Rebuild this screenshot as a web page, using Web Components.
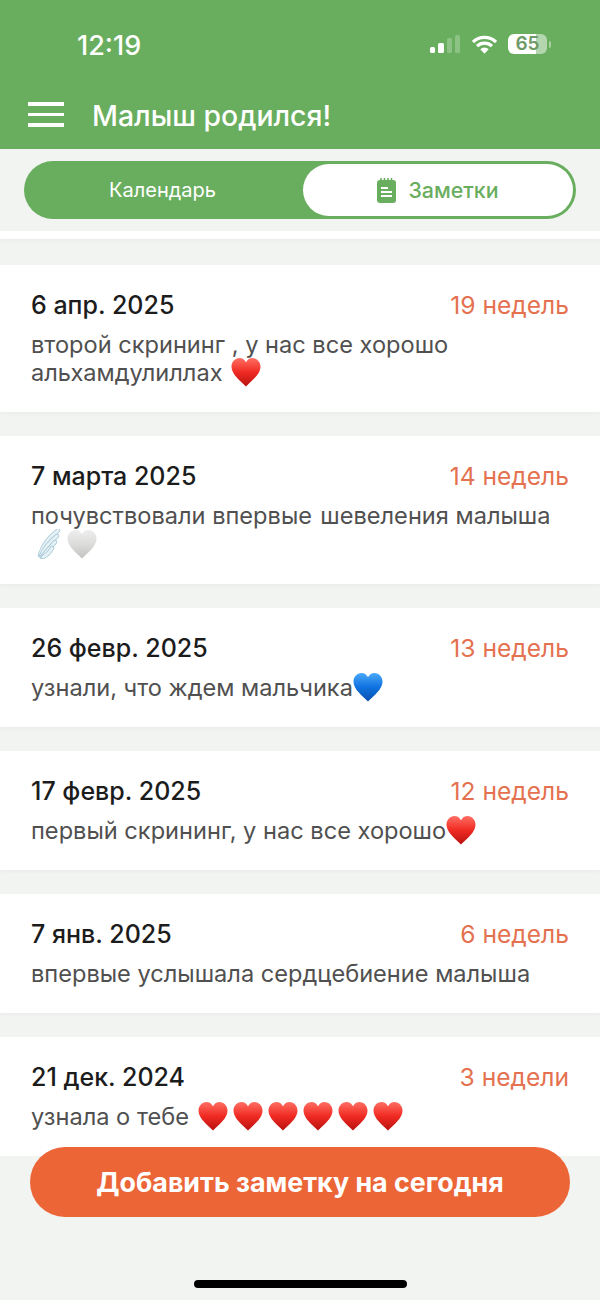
<!DOCTYPE html>
<html lang="ru">
<head>
<meta charset="utf-8">
<title>Малыш родился!</title>
<style>
  html, body { margin: 0; padding: 0; background: #f2f4f2; }
  body { font-family: Inter, "Noto Sans", sans-serif; }
</style>
</head>
<body>
<baby-screen>
  <status-bar slot="status" time="12:19" battery="65"></status-bar>
  <app-header slot="header">Малыш родился!</app-header>
  <note-tabs slot="tabs"></note-tabs>
  <note-list slot="list">
    <note-card date="6 апр. 2025" weeks="19 недель">второй скрининг , у нас все хорошо альхамдулиллах <emoji-icon kind="red" spaced></emoji-icon></note-card>
    <note-card date="7 марта 2025" weeks="14 недель">почувствовали впервые <span style="letter-spacing:-5px">&nbsp;</span>шевеления малыша <emoji-icon kind="wing" style="margin-right:-.6px"></emoji-icon> <emoji-icon kind="white"></emoji-icon></note-card>
    <note-card date="26 февр. 2025" weeks="13 недель">узнали, что ждем мальчика<emoji-icon kind="blue"></emoji-icon></note-card>
    <note-card date="17 февр. 2025" weeks="12 недель">первый скрининг, у нас все хорошо<emoji-icon kind="red"></emoji-icon></note-card>
    <note-card date="7 янв. 2025" weeks="6 недель">впервые услышала сердцебиение малыша</note-card>
    <note-card date="21 дек. 2024" weeks="3 недели">узнала о тебе <emoji-icon kind="red" spaced></emoji-icon> <emoji-icon kind="red"></emoji-icon> <emoji-icon kind="red"></emoji-icon> <emoji-icon kind="red"></emoji-icon> <emoji-icon kind="red"></emoji-icon> <emoji-icon kind="red"></emoji-icon></note-card>
  </note-list>
  <add-button slot="action">Добавить заметку на сегодня</add-button>
</baby-screen>

<script>
class BabyScreen extends HTMLElement {
  constructor() {
    super();
    this.attachShadow({ mode: "open" }).innerHTML = `
      <style>
        :host { display: flex; flex-direction: column; width: 600px; height: 1300px; overflow: hidden; position: relative; background: #f2f4f2; }
        .list { display: block; height: 925px; overflow: hidden; flex: none; }
        .action { position: absolute; left: 30px; right: 30px; top: 1147px; }
        .home { position: absolute; left: 194px; top: 1280px; width: 213px; height: 8px; border-radius: 4px; background: #000; }
      </style>
      <slot name="status"></slot>
      <slot name="header"></slot>
      <slot name="tabs"></slot>
      <div class="list"><slot name="list"></slot></div>
      <div class="action"><slot name="action"></slot></div>
      <div class="home"></div>
    `;
  }
}

class StatusBar extends HTMLElement {
  constructor() {
    super();
    const time = this.getAttribute("time");
    const battery = this.getAttribute("battery");
    this.attachShadow({ mode: "open" }).innerHTML = `
      <style>
        :host { display: flex; align-items: center; justify-content: space-between; height: 90px; box-sizing: border-box; padding: 0 53px 2px 77px; background: #69ae5e; color: #fff; }
        .time { font-size: 27px; font-weight: 500; margin-top: 2px; }
        .icons { display: flex; align-items: center; gap: 11px; }
        .battery { position: relative; width: 39px; height: 20px; border-radius: 6px; background: linear-gradient(90deg, #fff 72%, #b4d6ae 72%); color: #6f9a68; font: 600 19px/20px Inter, sans-serif; text-align: center; }
        .battery::after { content: ""; position: absolute; left: 41px; top: 7px; width: 2px; height: 7px; border-radius: 0 2px 2px 0; background: #a9d0a2; }
      </style>
      <span class="time">${time}</span>
      <span class="icons">
        <svg width="31" height="19" viewBox="0 0 31 19">
          <rect x="0" y="12" width="5" height="6" rx="1.500" fill="#fff"/>
          <rect x="8" y="8" width="6" height="10" rx="1.500" fill="#fff"/>
          <rect x="17" y="3" width="5" height="15" rx="1.500" fill="#8dc285"/>
          <rect x="25" y="0" width="5" height="18" rx="1.500" fill="#8dc285"/>
        </svg>
        <svg width="25" height="19" viewBox="0 0 25 19">
          <path d="M1 7a16.500 16.500 0 0 1 23 0M5 11.200a10.800 10.800 0 0 1 15 0" fill="none" stroke="#fff" stroke-width="3.200"/>
          <path d="M8.300 14.200a6 6 0 0 1 8.400 0L12.500 18.800z" fill="#fff"/>
        </svg>
        <span class="battery">${battery}</span>
      </span>
    `;
  }
}

class AppHeader extends HTMLElement {
  constructor() {
    super();
    this.attachShadow({ mode: "open" }).innerHTML = `
      <style>
        :host { display: flex; align-items: center; gap: 28px; height: 59px; box-sizing: border-box; padding: 0 0 10px 28px; background: #69ae5e; color: #fff; font-size: 28.400px; font-weight: 500; }
        .menu { display: flex; flex-direction: column; gap: 7.200px; width: 36px; }
        .menu i { display: block; height: 3.500px; background: #fff; }
        .title { padding-top: 2px; }
      </style>
      <span class="menu"><i></i><i></i><i></i></span>
      <span class="title"><slot></slot></span>
    `;
  }
}

class NoteTabs extends HTMLElement {
  constructor() {
    super();
    this.attachShadow({ mode: "open" }).innerHTML = `
      <style>
        :host { display: block; padding: 12px 24px; background: #f2f4f2; }
        .track { display: flex; height: 58px; box-sizing: border-box; padding: 3px; border-radius: 29px; background: #69ae5e; }
        .tab { display: flex; flex: 1; align-items: center; justify-content: center; gap: 12px; font-size: 20px; color: #fff; }
        .off { padding-right: 5px; }
        .on { flex: none; width: 270px; border-radius: 26px; background: #fff; color: #69ae5e; font-size: 21.400px; font-weight: 500; }
      </style>
      <div class="track">
        <span class="tab off">Календарь</span>
        <span class="tab on">
          <svg width="19" height="25" viewBox="0 0 19 25">
            <path d="M3 2h13a3 3 0 0 1 3 3v17a3 3 0 0 1-3 3H3a3 3 0 0 1-3-3V5a3 3 0 0 1 3-3z" fill="#69ae5e"/>
            <path d="M4 0v3M7.500 0v3M11 0v3M14.500 0v3" stroke="#69ae5e" stroke-width="1.600"/>
            <path d="M4 10h7M4 14h11M4 18h11" stroke="#fff" stroke-width="2"/>
          </svg>
          Заметки
        </span>
      </div>
    `;
  }
}

class NoteList extends HTMLElement {
  constructor() {
    super();
    this.attachShadow({ mode: "open" }).innerHTML = `
      <style>
        :host { display: flex; flex-direction: column; gap: 24px; }
        .stub { height: 8px; background: #fff; margin-bottom: 2px; box-shadow: 0 2px 4px rgba(0,0,0,.03); }
      </style>
      <div class="stub"></div>
      <slot></slot>
    `;
  }
}

class NoteCard extends HTMLElement {
  constructor() {
    super();
    const date = this.getAttribute("date");
    const weeks = this.getAttribute("weeks");
    this.attachShadow({ mode: "open" }).innerHTML = `
      <style>
        :host { display: block; box-sizing: border-box; padding: 22px 31px 24.800px; background: #fff; box-shadow: 0 2px 4px rgba(0,0,0,.03); }
        .top { display: flex; justify-content: space-between; align-items: baseline; height: 36px; line-height: 36px; margin-bottom: 8px; }
        .date { font-size: 25px; font-weight: 500; color: #1c1c1c; }
        .weeks { font-size: 24.600px; color: #e4714f; }
        .text { font-size: 23.600px; line-height: 28.300px; color: #505050; width: 530px; }
      </style>
      <div class="top"><span class="date">${date}</span><span class="weeks">${weeks}</span></div>
      <div class="text"><slot></slot></div>
    `;
  }
}

// hearts and the wing are drawn, no emoji font is installed
const HEARTS = {
  red: ["#ff6f64", "#f02a22", "#b81210"],
  blue: ["#4aa8f8", "#0f72e0", "#0a50ac"],
  white: ["#eeeeee", "#dcdcdb", "#c2c2c0"],
};
let emojiId = 0;

class EmojiIcon extends HTMLElement {
  constructor() {
    super();
    const kind = this.getAttribute("kind");
    const id = "e" + emojiId++;
    let art;
    if (kind === "wing") {
      const feathers = ["M9 26Q13 12 27 1.500", "M10 27Q15 16 26 7", "M11 28Q17 21 24 13", "M12 28Q18 25 21 19"];
      art = feathers.map(d => `
        <path d="${d}" fill="none" stroke="#9fc3d3" stroke-width="4.400" stroke-linecap="round"/>
        <path d="${d}" fill="none" stroke="#e6f1f6" stroke-width="3" stroke-linecap="round"/>`).join("");
    } else {
      const c = HEARTS[kind];
      art = `
        <defs><linearGradient id="${id}" x1="0" y1="0" x2="0" y2="1">
          <stop offset="0" stop-color="${c[0]}"/><stop offset=".5" stop-color="${c[1]}"/><stop offset="1" stop-color="${c[2]}"/>
        </linearGradient></defs>
        <path d="M15 29.500C9 23.500.8 17.500.5 10 .3 5 4 1 8.500 1c2.800 0 5 1.500 6.500 4.200C16.500 2.500 18.700 1 21.500 1 26 1 29.700 5 29.500 10 29.200 17.500 21 23.500 15 29.500z" fill="url(#${id})"/>`;
    }
    this.attachShadow({ mode: "open" }).innerHTML = `
      <style>
        :host { display: inline-block; width: 30px; height: 30px; margin: -6px -1.600px -6px 0; vertical-align: 0; }
        :host([spaced]) { margin-left: 2px; }
        svg { display: block; }
      </style>
      <svg width="30" height="30" viewBox="0 0 30 30">${art}</svg>
    `;
  }
}

class AddButton extends HTMLElement {
  constructor() {
    super();
    this.attachShadow({ mode: "open" }).innerHTML = `
      <style>
        :host { display: flex; align-items: center; justify-content: center; height: 70px; border-radius: 35px; background: #ec6537; color: #fff; font-size: 26.800px; font-weight: 700; }
      </style>
      <slot></slot>
    `;
  }
}

customElements.define("baby-screen", BabyScreen);
customElements.define("status-bar", StatusBar);
customElements.define("app-header", AppHeader);
customElements.define("note-tabs", NoteTabs);
customElements.define("note-list", NoteList);
customElements.define("note-card", NoteCard);
customElements.define("emoji-icon", EmojiIcon);
customElements.define("add-button", AddButton);
</script>
</body>
</html>
